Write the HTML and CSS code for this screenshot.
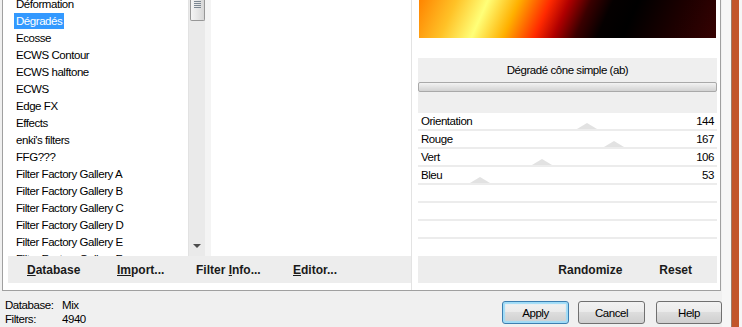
FILE: index.html
```html
<!DOCTYPE html>
<html>
<head>
    <title>Filters Unlimited</title>
    <link rel="stylesheet" href="styles.css">
</head>
<body>
    <div class="window">
        <div class="main">
            <div class="group">
                <div class="left">
                    <div class="lists">
                        <ul class="filter-list">
                            <li><span>Déformation</span></li>
                            <li class="selected"><span>Dégradés</span></li>
                            <li><span>Ecosse</span></li>
                            <li><span>ECWS Contour</span></li>
                            <li><span>ECWS halftone</span></li>
                            <li><span>ECWS</span></li>
                            <li><span>Edge FX</span></li>
                            <li><span>Effects</span></li>
                            <li><span>enki's filters</span></li>
                            <li><span>FFG???</span></li>
                            <li><span>Filter Factory Gallery A</span></li>
                            <li><span>Filter Factory Gallery B</span></li>
                            <li><span>Filter Factory Gallery C</span></li>
                            <li><span>Filter Factory Gallery D</span></li>
                            <li><span>Filter Factory Gallery E</span></li>
                            <li><span>Filter Factory Gallery F</span></li>
                        </ul>
                        <div class="scrollbar">
                            <div class="thumb"><i></i><i></i><i></i><i></i></div>
                            <div class="arrow-down"></div>
                        </div>
                        <div class="strip"></div>
                        <div class="effect-list"></div>
                    </div>
                    <div class="toolbar">
                        <span class="tool tool-db"><u>D</u>atabase</span>
                        <span class="tool tool-import"><u>Im</u>port...</span>
                        <span class="tool tool-info">Filter <u>I</u>nfo...</span>
                        <span class="tool"><u>E</u>ditor...</span>
                    </div>
                </div>
                <div class="divider"></div>
                <div class="right">
                    <div class="preview"></div>
                    <div class="filter-head">
                        <div class="filter-name">Dégradé cône simple (ab)</div>
                        <div class="progress"></div>
                    </div>
                    <div class="params">
                        <div class="param"><span>Orientation</span><span>144</span><b class="knob" style="left: 56.5%"></b></div>
                        <div class="param"><span>Rouge</span><span>167</span><b class="knob" style="left: 65.5%"></b></div>
                        <div class="param"><span>Vert</span><span>106</span><b class="knob" style="left: 41.6%"></b></div>
                        <div class="param"><span>Bleu</span><span>53</span><b class="knob" style="left: 20.8%"></b></div>
                        <div class="param"></div>
                        <div class="param"></div>
                        <div class="param"></div>
                    </div>
                    <div class="toolbar toolbar-right">
                        <span class="tool">Randomize</span>
                        <span class="tool">Reset</span>
                    </div>
                </div>
            </div>
            <div class="footer">
                <div class="status">
                    <div class="status-row"><span class="status-label">Database:</span><span>Mix</span></div>
                    <div class="status-row"><span class="status-label">Filters:</span><span>4940</span></div>
                </div>
                <div class="buttons">
                    <button class="btn btn-default">Apply</button>
                    <button class="btn">Cancel</button>
                    <button class="btn btn-help">Help</button>
                </div>
            </div>
        </div>
        <div class="edge"><div class="edge-line"></div></div>
    </div>
</body>
</html>
```

FILE: styles.css
```css
body {
    margin: 0;
    padding: 0;
    background-color: #f0f0f0;
    font-family: "Liberation Sans", Arial, sans-serif;
    font-size: 11.5px;
    letter-spacing: -0.45px;
    color: #000;
}
.window {
    display: flex;
    width: 742px;
    height: 327px;
    overflow: hidden;
}
.main {
    width: 722px;
}
.group {
    display: flex;
    width: 717px;
    height: 290px;
    margin-left: 2px;
    background-color: #fff;
    border: 1px solid #a0a0a0;
    border-top: none;
}
.left {
    width: 408px;
    display: flex;
    flex-direction: column;
}
.lists {
    display: flex;
    height: 256px;
}
.filter-list {
    width: 185px;
    margin: -5px 0 0 0;
    padding: 0;
    list-style: none;
    overflow: hidden;
}
.filter-list li {
    height: 17px;
    padding-left: 11px;
}
.filter-list span {
    display: inline-block;
    margin-top: 1px;
    padding: 0 2px;
    line-height: 16px;
    white-space: nowrap;
}
.filter-list .selected span {
    background-color: #3399ff;
    color: #fff;
}
.scrollbar {
    width: 17px;
    background-color: #eaeaea;
    border-left: 1px solid #e2e2e2;
    box-sizing: border-box;
    display: flex;
    flex-direction: column;
    align-items: center;
}
.thumb {
    width: 15px;
    height: 21px;
    box-sizing: border-box;
    border: 1px solid #979797;
    border-top: none;
    border-radius: 0 0 2px 2px;
    background: linear-gradient(to right, #f5f5f5, #e4e4e4 60%, #d6d6d6);
    display: flex;
    flex-direction: column;
    align-items: center;
    gap: 1px;
    padding-top: 1px;
}
.thumb i {
    display: block;
    width: 7px;
    height: 1px;
    background-color: #7c8792;
}
.arrow-down {
    margin-top: auto;
    margin-bottom: 8px;
    width: 0;
    height: 0;
    border-left: 4px solid transparent;
    border-right: 4px solid transparent;
    border-top: 4px solid #4d4d4d;
}
.strip {
    width: 6px;
    background-color: #f4f4f4;
}
.effect-list {
    width: 200px;
    background-color: #fff;
}
.toolbar {
    display: flex;
    align-items: center;
    height: 27px;
    background-color: #ededed;
    font-size: 12px;
    font-weight: bold;
    letter-spacing: 0;
    color: #1a1a1a;
}
.left .toolbar {
    margin-left: 5px;
    padding-left: 19px;
}
.tool {
    white-space: nowrap;
}
.tool-db {
    width: 90px;
}
.tool-import {
    width: 79px;
}
.tool-info {
    width: 97px;
}
.divider {
    width: 1px;
    background-color: #e3e3e3;
}
.right {
    width: 299px;
    padding: 0 3px 7px 6px;
    display: flex;
    flex-direction: column;
}
.preview {
    height: 38px;
    margin: 0 1px;
    background: linear-gradient(114deg, #ff8400 0%, #ffc227 12%, #ffff78 22%, #ffb000 32%, #ff2a00 42%, #b00000 48%, #3a0000 55%, #050000 62%, #000 70%, #1c0000 85%, #360202 100%);
}
.filter-head {
    margin-top: 20px;
    height: 55px;
    background-color: #efefef;
}
.filter-name {
    height: 24px;
    line-height: 24px;
    text-align: center;
}
.progress {
    height: 10px;
    box-sizing: border-box;
    border: 1px solid #a9a9a9;
    border-radius: 2px;
    background: linear-gradient(#f3f3f3, #e2e2e2 50%, #d2d2d2);
}
.param {
    position: relative;
    height: 16px;
    border-bottom: 2px solid #ececec;
    display: flex;
    justify-content: space-between;
    padding: 0 3px;
    line-height: 16px;
}
.knob {
    position: absolute;
    bottom: 0;
    width: 0;
    height: 0;
    margin-left: -10px;
    border-left: 10px solid transparent;
    border-right: 10px solid transparent;
    border-bottom: 6px solid #e2e2e2;
}
.toolbar-right {
    margin-top: auto;
    justify-content: flex-end;
    gap: 37px;
    padding-right: 25px;
}
.footer {
    display: flex;
}
.status {
    padding: 7px 0 0 5px;
}
.status-row {
    display: flex;
    line-height: 14px;
}
.status-label {
    width: 57px;
}
.buttons {
    display: flex;
    margin-left: auto;
    margin-top: 10px;
    gap: 9px;
}
.btn {
    width: 67px;
    height: 23px;
    padding: 0;
    border: 1px solid #707070;
    border-radius: 3px;
    background: linear-gradient(#f2f2f2, #ebebeb 45%, #dddddd 50%, #cfcfcf);
    font-family: "Liberation Sans", Arial, sans-serif;
    font-size: 11.5px;
    letter-spacing: -0.45px;
    color: #000;
}
.btn-default {
    border-color: #3c7fb1;
    box-shadow: inset 0 0 1px 2px #9fdcf8;
}
.btn-help {
    margin-left: 2px;
    width: 66px;
}
.edge {
    width: 20px;
    display: flex;
    background-color: #f6f6f6;
}
.edge-line {
    width: 7px;
    margin-left: 9px;
    border-left: 1px solid #9d7b69;
    background-color: #c2552b;
}
```
